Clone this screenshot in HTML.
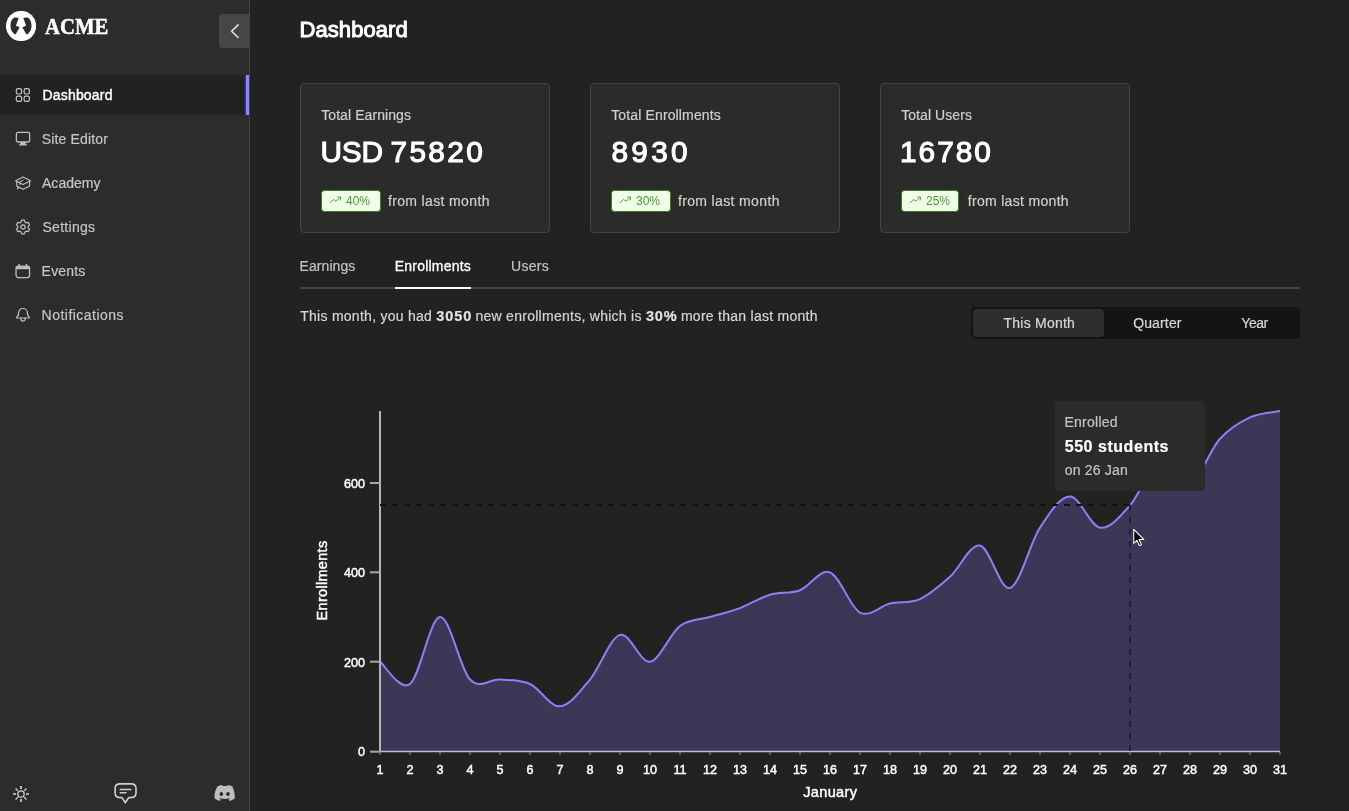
<!DOCTYPE html>
<html lang="en">
<head>
<meta charset="utf-8">
<title>Dashboard</title>
<style>
*{box-sizing:border-box;margin:0;padding:0}
html,body{width:1349px;height:811px;overflow:hidden;background:#222221;color:#fff;font-family:"Liberation Sans",Arial,sans-serif;font-size:14px;-webkit-font-smoothing:antialiased}
.abs{position:absolute}
#sidebar{will-change:transform;position:absolute;left:0;top:0;width:250px;height:811px;background:#2c2c2b;border-right:1px solid #434343}
#logo{position:absolute;left:6px;top:11px;width:30px;height:30px}
#brand{position:absolute;left:45px;top:14px;font-family:"Liberation Serif","DejaVu Serif",serif;font-weight:bold;font-size:23px;line-height:26px;color:#fff;transform-origin:0 50%;transform:scaleX(.9);white-space:nowrap;-webkit-text-stroke:.5px #fff}
#collapse{position:absolute;left:219px;top:14px;width:30px;height:34px;background:#464646;border-radius:3px 0 0 3px}
.nav{position:absolute;left:0;width:249px;height:40px;color:#c6c6c6;font-size:14px}
.nav.active{background:#222221;color:#fff;-webkit-text-stroke:.4px #fff}
.nav.active:after{content:"";position:absolute;right:0;top:0;width:5px;height:40px;background:linear-gradient(90deg,#241f78 0,#241f78 28%,#8f84ff 40%,#8f84ff 100%)}
.nav svg{position:absolute;left:15px;top:12px;width:16px;height:16px}
.nav span{position:absolute;left:42px;top:0;line-height:40px;white-space:nowrap}
.foot{position:absolute;top:783px;width:22px;height:22px}
#main h1{position:absolute;left:300px;top:14.7px;font-size:22px;line-height:30px;font-weight:normal;white-space:nowrap;-webkit-text-stroke:1px #fff}
.card{position:absolute;top:83px;width:250px;height:150px;background:#2b2b2a;border:1px solid #444443;border-radius:4px}
.card .t{position:absolute;left:20px;top:21px;font-size:14px;line-height:20px;color:#cfcfcf;white-space:nowrap}
.card .v{position:absolute;left:20px;top:47.55px;font-size:29.8px;line-height:40px;color:#fff;white-space:nowrap;-webkit-text-stroke:1.1px #fff}
.card .b{position:absolute;left:19.5px;top:105.5px;height:22.5px;width:60px;background:#f0ffe8;border:1px solid #3d7a22;border-radius:3.5px;color:#4a9a36;font-size:12px;line-height:20px}
.card .b svg{position:absolute;left:-1px;top:-1px;width:60px;height:22px}
.card .b span{position:absolute;left:24.5px;top:.3px}
.card .f{position:absolute;left:88px;top:107px;font-size:14px;line-height:20px;color:#d0d0d0;white-space:nowrap}
.tab{position:absolute;top:256px;font-size:14px;line-height:20px;color:#c4c4c4;white-space:nowrap}
.tab.on{color:#fff;-webkit-text-stroke:.32px #fff}
#tabline{position:absolute;left:300px;top:287px;width:1000px;height:2px;background:#474747}
#tabon{position:absolute;left:395px;top:287px;width:76px;height:2px;background:#fff}
#sent{position:absolute;left:300px;top:306px;font-size:14px;line-height:20px;color:#d6d6d6;white-space:nowrap}
#sent b{color:#e4e4e4;font-size:14.5px;letter-spacing:.9px;margin-right:-.9px}
#seg{position:absolute;left:971px;top:307px;width:329px;height:32px;background:#141414;border-radius:4px}
#seg .on{position:absolute;left:2px;top:2px;width:131px;height:28px;background:#2e2e2e;border-radius:4px}
#seg span{position:absolute;top:6px;line-height:20px;font-size:14px;color:#d8d8d8;white-space:nowrap;transform:translateX(-50%)}
#main{will-change:transform;position:absolute;left:0;top:0;width:1349px;height:811px}
#chart{position:absolute;left:0;top:0;width:1349px;height:811px;pointer-events:none}
#chart text{font-family:"Liberation Sans",Arial,sans-serif;fill:#fff;stroke:#fff;stroke-width:.45px}
#tip{position:absolute;left:1055px;top:401px;width:149.5px;height:90px;background:#2b2b2a;border-radius:4px}
#v1a,#v1b{display:inline-block}
.t,.f,.tab,#sent,.nav,#seg span,#tip div{-webkit-text-stroke:.2px}
#tip div{position:absolute;left:10px;white-space:nowrap}
#n1{letter-spacing:0.18px;margin-left:0.5px}
#n2{letter-spacing:0.14px;margin-left:-0.2px}
#n3{letter-spacing:0.03px;margin-left:0px}
#n4{letter-spacing:0.28px;margin-left:0.5px}
#n5{letter-spacing:0.18px;margin-left:-0.4px}
#n6{letter-spacing:0.47px;margin-left:-0.4px}
#h1{letter-spacing:0.07px;margin-left:-0.5px}
#t1{letter-spacing:0.08px;margin-left:0.2px}
#t2{letter-spacing:0.14px;margin-left:0.2px}
#t3{letter-spacing:0.07px;margin-left:0.2px}
#v2{letter-spacing:3.3px;margin-left:0.5px}
#v3{letter-spacing:1.94px;margin-left:-0.9px}
#f1{letter-spacing:0.36px;margin-left:-1.1px}
#f2{letter-spacing:0.36px;margin-left:-1.1px}
#f3{letter-spacing:0.32px;margin-left:-1.3px}
#tab1{letter-spacing:0.05px;margin-left:-0.4px}
#tab2{letter-spacing:0.2px;margin-left:-0.2px}
#tab3{letter-spacing:0.27px;margin-left:0px}
#sent{letter-spacing:0.27px;margin-left:0.2px}
#seg1{letter-spacing:0.22px;margin-left:1.3px}
#seg2{letter-spacing:0.15px;margin-left:0.4px}
#seg3{letter-spacing:-0.48px;margin-left:0.5px}
#tip1{letter-spacing:0.26px;margin-left:-0.6px}
#tip2{letter-spacing:0.54px;margin-left:-0.3px}
#tip3{letter-spacing:0.18px;margin-left:-0.2px}
#v1a{letter-spacing:-0.18px;margin-left:-0.5px}
#v1b{letter-spacing:2.38px;margin-left:-0.7px}
</style>
</head>
<body>
<div id="sidebar">
<svg id="logo" viewBox="0 0 30 30"><circle cx="15.1" cy="15" r="15.1" fill="#fff"/><path id="lg" fill="#2c2c2b" d="M8.6,6.5C10,6.2 11.6,6.5 12.7,7L9.9,14.7L13.7,16.3L10,22.7C9.5,23.4 8.8,23.5 8.2,23C5.8,21 4.5,18 4.5,14.7C4.5,11 6,7.4 8.6,6.5Z"/><path fill="#2c2c2b" transform="translate(30 0) scale(-1 1)" d="M8.6,6.5C10,6.2 11.6,6.5 12.7,7L9.9,14.7L13.7,16.3L10,22.7C9.5,23.4 8.8,23.5 8.2,23C5.8,21 4.5,18 4.5,14.7C4.5,11 6,7.4 8.6,6.5Z"/></svg>
<div id="brand">ACME</div>
<div id="collapse"><svg width="30" height="34" viewBox="0 0 30 34"><path d="M19.1,10.9L12.6,17.2L19.1,23.5" fill="none" stroke="#e8e8e8" stroke-width="1.5" stroke-linecap="round" stroke-linejoin="round"/></svg></div>

<div class="nav active" style="top:75px"><svg viewBox="0 0 16 16" fill="none" stroke="#c8c8c8" stroke-width="1.2"><rect x="1.3" y="1.7" width="5.3" height="5.3" rx="1.7"/><rect x="9.1" y="1.7" width="5.3" height="5.3" rx="1.7"/><rect x="1.3" y="9.1" width="5.3" height="5.3" rx="1.7"/><rect x="9.1" y="9.1" width="5.3" height="5.3" rx="1.7"/></svg><span id="n1">Dashboard</span></div>

<div class="nav" style="top:119px"><svg viewBox="0 0 16 16" fill="none" stroke="#c0c0c0" stroke-width="1.3"><rect x="1.4" y="1.4" width="13.2" height="9.6" rx="1.6"/><path d="M5.6,11.2L5,13.4H3.9V14.6H12.1V13.4H11L10.4,11.2Z" fill="#c0c0c0" stroke="none"/></svg><span id="n2">Site Editor</span></div>

<div class="nav" style="top:163px"><svg viewBox="0 0 16 16" fill="none" stroke="#c0c0c0" stroke-width="1.15" stroke-linejoin="round" stroke-linecap="round" style="overflow:visible"><path d="M0.6,5.7L8.1,1.9L15.6,5.7L8.1,9.5Z"/><path d="M1.7,6.5V10.9L8.1,14.3L14.6,10.9V6.5"/><path d="M8.1,5.2L4.9,6.8V9.6" stroke-width="1"/><path d="M2.5,12.3V14.3L4.2,12.9Z" fill="#c0c0c0" stroke-width=".6"/></svg><span id="n3">Academy</span></div>

<div class="nav" style="top:207px"><svg viewBox="0 0 16 16" fill="none" stroke="#c0c0c0" stroke-width="1.2" stroke-linejoin="round"><circle cx="8" cy="8" r="2.2"/><path id="gear" d="M6.6,1.2H9.4L9.9,3.1L11.3,3.9L13.2,3.4L14.6,5.8L13.2,7.2V8.8L14.6,10.2L13.2,12.6L11.3,12.1L9.9,12.9L9.4,14.8H6.6L6.1,12.9L4.7,12.1L2.8,12.6L1.4,10.2L2.8,8.8V7.2L1.4,5.8L2.8,3.4L4.7,3.9L6.1,3.1Z"/></svg><span id="n4">Settings</span></div>

<div class="nav" style="top:251px"><svg viewBox="0 0 16 16" fill="none" stroke="#c0c0c0" stroke-width="1.3" style="overflow:visible"><rect x="1.05" y="3.05" width="13.5" height="11.5" rx="2.2"/><path d="M1.2,3.4H14.4V6.2H1.2Z" fill="#c0c0c0" stroke="none"/><path d="M4.1,1V3.2M11.5,1V3.2" stroke-width="1.5"/></svg><span id="n5">Events</span></div>

<div class="nav" style="top:295px"><svg viewBox="0 0 16 16" fill="none" stroke="#c0c0c0" stroke-width="1.2" stroke-linejoin="round" stroke-linecap="round"><path d="M8,1.5C5.4,1.5 3.5,3.5 3.5,6V8L1.7,10.2C1.4,10.6 1.6,11 2.1,11H13.9C14.4,11 14.6,10.6 14.3,10.2L12.5,8V6C12.5,3.5 10.6,1.5 8,1.5Z"/><path d="M5.8,11.2C5.9,13 6.8,14.2 8,14.2C9.2,14.2 10.1,13 10.2,11.2"/></svg><span id="n6">Notifications</span></div>

<svg class="foot" style="left:10px" viewBox="0 0 22 22" fill="none" stroke="#d0d0d0" stroke-width="1.7"><circle cx="11" cy="11" r="3.2" stroke-width="1.3"/><path d="M11,3V6M11,16V19M3,11H6M16,11H19"/><path d="M5.55,5.55L7.75,7.75M14.25,14.25L16.45,16.45M5.55,16.45L7.75,14.25M14.25,7.75L16.45,5.55" stroke-width="1.3"/></svg>
<svg class="foot" style="left:112px;top:781px;width:26px;height:25px" viewBox="0 0 26 25" fill="none" stroke="#cfcfcf" stroke-width="1.6" stroke-linejoin="round" stroke-linecap="round"><path d="M8,2.9H19C22.6,2.9 24,4.3 24,7.4V12.1C24,15.2 22.6,16.6 19,16.6H16.6L13.3,21.8L10.1,16.6H8C4.4,16.6 3.1,15.2 3.1,12.1V7.4C3.1,4.3 4.4,2.9 8,2.9Z"/><path d="M8.2,8.6H18.8M8.2,11.8H14" stroke-width="1.5"/></svg>
<svg class="foot" style="left:212.5px;top:782.9px;width:23.54px;height:21.4px" viewBox="0 0 22 20"><path fill="#bdbdbd" d="M17.9,3.1C16.6,2.5 15.3,2.1 13.9,1.9L13.4,2.9C11.9,2.7 10.4,2.7 8.9,2.9L8.4,1.9C7,2.1 5.6,2.5 4.4,3.1C1.8,6.9 1.1,10.7 1.5,14.4C3.1,15.6 4.7,16.3 6.2,16.8L7.3,15.1C6.7,14.9 6.2,14.6 5.7,14.3L6.1,14C9.2,15.4 12.6,15.4 15.7,14L16.1,14.3C15.6,14.6 15,14.9 14.5,15.1L15.6,16.8C17.1,16.3 18.7,15.6 20.3,14.4C20.8,10.1 19.5,6.4 17.9,3.1ZM7.8,12.1C6.9,12.1 6.1,11.2 6.1,10.2C6.1,9.2 6.8,8.3 7.8,8.3C8.8,8.3 9.5,9.2 9.5,10.2C9.5,11.2 8.8,12.1 7.8,12.1ZM14,12.1C13.1,12.1 12.3,11.2 12.3,10.2C12.3,9.2 13,8.3 14,8.3C15,8.3 15.7,9.2 15.7,10.2C15.7,11.2 15,12.1 14,12.1Z"/></svg>
</div>
<div id="main">
<h1 id="h1">Dashboard</h1>

<div class="card" style="left:300px"><div class="t" id="t1">Total Earnings</div><div class="v" id="v1"><span id="v1a">USD</span> <span id="v1b">75820</span></div><div class="b"><svg viewBox="0 0 60 22" fill="none" stroke="#4a9a36" stroke-width=".9" stroke-linecap="round" stroke-linejoin="round"><path d="M9.3,12.7L12.4,9.5L15,11.1L19.4,7.4M16.6,6.9L19.8,7.2L19.2,10.1"/></svg><span id="p1">40%</span></div><div class="f" id="f1">from last month</div></div>

<div class="card" style="left:590px"><div class="t" id="t2">Total Enrollments</div><div class="v" id="v2">8930</div><div class="b"><svg viewBox="0 0 60 22" fill="none" stroke="#4a9a36" stroke-width=".9" stroke-linecap="round" stroke-linejoin="round"><path d="M9.3,12.7L12.4,9.5L15,11.1L19.4,7.4M16.6,6.9L19.8,7.2L19.2,10.1"/></svg><span id="p2">30%</span></div><div class="f" id="f2">from last month</div></div>

<div class="card" style="left:880px"><div class="t" id="t3">Total Users</div><div class="v" id="v3">16780</div><div class="b" style="width:58.5px"><svg viewBox="0 0 60 22" fill="none" stroke="#4a9a36" stroke-width=".9" stroke-linecap="round" stroke-linejoin="round"><path d="M9.3,12.7L12.4,9.5L15,11.1L19.4,7.4M16.6,6.9L19.8,7.2L19.2,10.1"/></svg><span id="p3">25%</span></div><div class="f" id="f3">from last month</div></div>

<div class="tab" id="tab1" style="left:300px">Earnings</div>
<div class="tab on" id="tab2" style="left:395px">Enrollments</div>
<div class="tab" id="tab3" style="left:511px">Users</div>
<div id="tabline"></div><div id="tabon"></div>

<div id="sent">This month, you had <b>3050</b> new enrollments, which is <b>30%</b> more than last month</div>

<div id="seg"><div class="on"></div><span id="seg1" style="left:67px">This Month</span><span id="seg2" style="left:186px">Quarter</span><span id="seg3" style="left:283px">Year</span></div>

<svg id="chart" viewBox="0 0 1349 811">
<path d="M380,661.67C385,665.39,400,691.44,410,684C420,676.56,430,617.74,440,617C450,616.26,460,669.11,470,679.53C480,689.96,490,678.79,500,679.53C510,680.28,520,679.53,530,684C540,688.47,550,707.08,560,706.33C570,705.59,580,691.44,590,679.53C600,667.62,610,637.84,620,634.87C630,631.89,640,663.16,650,661.67C660,660.18,670,633.38,680,625.93C690,618.49,700,619.98,710,617C720,614.02,730,611.79,740,608.07C750,604.34,760,597.64,770,594.67C780,591.69,790,593.92,800,590.2C810,586.48,820,568.61,830,572.33C840,576.06,850,607.32,860,612.53C870,617.74,880,605.83,890,603.6C900,601.37,910,603.6,920,599.13C930,594.67,940,585.73,950,576.8C960,567.87,970,543.67,980,545.53C990,547.39,1000,590.94,1010,587.97C1020,584.99,1030,542.93,1040,527.67C1050,512.41,1060,496.4,1070,496.4C1080,496.4,1090,526.18,1100,527.67C1110,529.16,1120,516.5,1130,505.33C1140,494.17,1150,464.39,1160,460.67C1170,456.94,1180,486.65,1190,483C1200,479.35,1210,449.72,1220,438.78C1230,427.84,1240,421.96,1250,417.34C1260,412.72,1275,412.13,1280,411.09L1280,751L380,751Z" fill="#3c3756"/>
<path d="M380,661.67C385,665.39,400,691.44,410,684C420,676.56,430,617.74,440,617C450,616.26,460,669.11,470,679.53C480,689.96,490,678.79,500,679.53C510,680.28,520,679.53,530,684C540,688.47,550,707.08,560,706.33C570,705.59,580,691.44,590,679.53C600,667.62,610,637.84,620,634.87C630,631.89,640,663.16,650,661.67C660,660.18,670,633.38,680,625.93C690,618.49,700,619.98,710,617C720,614.02,730,611.79,740,608.07C750,604.34,760,597.64,770,594.67C780,591.69,790,593.92,800,590.2C810,586.48,820,568.61,830,572.33C840,576.06,850,607.32,860,612.53C870,617.74,880,605.83,890,603.6C900,601.37,910,603.6,920,599.13C930,594.67,940,585.73,950,576.8C960,567.87,970,543.67,980,545.53C990,547.39,1000,590.94,1010,587.97C1020,584.99,1030,542.93,1040,527.67C1050,512.41,1060,496.4,1070,496.4C1080,496.4,1090,526.18,1100,527.67C1110,529.16,1120,516.5,1130,505.33C1140,494.17,1150,464.39,1160,460.67C1170,456.94,1180,486.65,1190,483C1200,479.35,1210,449.72,1220,438.78C1230,427.84,1240,421.96,1250,417.34C1260,412.72,1275,412.13,1280,411.09" fill="none" stroke="#8b80f5" stroke-width="2"/>
<line x1="380" y1="751.5" x2="1280" y2="751.5" stroke="#bdb8ec" stroke-width="1.5"/>
<g stroke="#8f8f9a" stroke-width="1"><line x1="380" y1="752" x2="380" y2="755"/><line x1="410" y1="752" x2="410" y2="755"/><line x1="440" y1="752" x2="440" y2="755"/><line x1="470" y1="752" x2="470" y2="755"/><line x1="500" y1="752" x2="500" y2="755"/><line x1="530" y1="752" x2="530" y2="755"/><line x1="560" y1="752" x2="560" y2="755"/><line x1="590" y1="752" x2="590" y2="755"/><line x1="620" y1="752" x2="620" y2="755"/><line x1="650" y1="752" x2="650" y2="755"/><line x1="680" y1="752" x2="680" y2="755"/><line x1="710" y1="752" x2="710" y2="755"/><line x1="740" y1="752" x2="740" y2="755"/><line x1="770" y1="752" x2="770" y2="755"/><line x1="800" y1="752" x2="800" y2="755"/><line x1="830" y1="752" x2="830" y2="755"/><line x1="860" y1="752" x2="860" y2="755"/><line x1="890" y1="752" x2="890" y2="755"/><line x1="920" y1="752" x2="920" y2="755"/><line x1="950" y1="752" x2="950" y2="755"/><line x1="980" y1="752" x2="980" y2="755"/><line x1="1010" y1="752" x2="1010" y2="755"/><line x1="1040" y1="752" x2="1040" y2="755"/><line x1="1070" y1="752" x2="1070" y2="755"/><line x1="1100" y1="752" x2="1100" y2="755"/><line x1="1130" y1="752" x2="1130" y2="755"/><line x1="1160" y1="752" x2="1160" y2="755"/><line x1="1190" y1="752" x2="1190" y2="755"/><line x1="1220" y1="752" x2="1220" y2="755"/><line x1="1250" y1="752" x2="1250" y2="755"/><line x1="1280" y1="752" x2="1280" y2="755"/></g>
<line x1="380" y1="411" x2="380" y2="752" stroke="#b4b4b8" stroke-width="2"/>
<g stroke="#a8a8a8" stroke-width="2"><line x1="370" y1="483" x2="380" y2="483"/><line x1="370" y1="572.3" x2="380" y2="572.3"/><line x1="370" y1="661.7" x2="380" y2="661.7"/><line x1="370" y1="751.7" x2="380" y2="751.7"/></g>
<g font-size="12.6" text-anchor="end"><text x="365" y="488">600</text><text x="365" y="577.4">400</text><text x="365" y="666.8">200</text><text x="365" y="756">0</text></g>
<g font-size="12.6" text-anchor="middle"><text x="380" y="774.2">1</text><text x="410" y="774.2">2</text><text x="440" y="774.2">3</text><text x="470" y="774.2">4</text><text x="500" y="774.2">5</text><text x="530" y="774.2">6</text><text x="560" y="774.2">7</text><text x="590" y="774.2">8</text><text x="620" y="774.2">9</text><text x="650" y="774.2">10</text><text x="680" y="774.2">11</text><text x="710" y="774.2">12</text><text x="740" y="774.2">13</text><text x="770" y="774.2">14</text><text x="800" y="774.2">15</text><text x="830" y="774.2">16</text><text x="860" y="774.2">17</text><text x="890" y="774.2">18</text><text x="920" y="774.2">19</text><text x="950" y="774.2">20</text><text x="980" y="774.2">21</text><text x="1010" y="774.2">22</text><text x="1040" y="774.2">23</text><text x="1070" y="774.2">24</text><text x="1100" y="774.2">25</text><text x="1130" y="774.2">26</text><text x="1160" y="774.2">27</text><text x="1190" y="774.2">28</text><text x="1220" y="774.2">29</text><text x="1250" y="774.2">30</text><text x="1280" y="774.2">31</text></g>
<text x="830.3" y="797" font-size="14.5" letter-spacing=".35" text-anchor="middle">January</text>
<text transform="translate(326.5 580.5) rotate(-90)" font-size="14.5" letter-spacing=".3" text-anchor="middle">Enrollments</text>
<line x1="380" y1="505" x2="1130" y2="505" stroke="#121212" stroke-width="2" stroke-dasharray="6 6"/>
<line x1="1130" y1="505" x2="1130" y2="751" stroke="#241f38" stroke-width="2" stroke-dasharray="6 6"/>
</svg>

<div id="tip"><div id="tip1" style="top:11.3px;font-size:14px;line-height:20px;color:#c4c4c4">Enrolled</div><div id="tip2" style="top:35.1px;font-size:16px;line-height:22px;font-weight:bold;color:#fff">550 students</div><div id="tip3" style="top:59.3px;font-size:14px;line-height:20px;color:#c4c4c4">on 26 Jan</div></div>

<svg class="abs" style="left:1131.5px;top:528px" width="14.24" height="19.58" viewBox="0 0 16 22"><path d="M2,1.5V17.2L5.6,13.8L8.2,19.8L10.6,18.8L8,12.9H13.2Z" fill="#000" stroke="#fff" stroke-width="1.2" stroke-linejoin="round"/></svg>
</div>
</body>
</html>
